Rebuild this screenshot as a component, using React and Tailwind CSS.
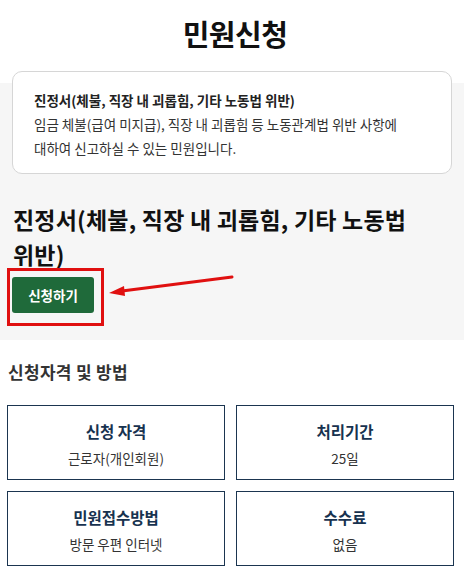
const INFO = [
  { title: "신청 자격", value: "근로자(개인회원)" },
  { title: "처리기간", value: "25일" },
  { title: "민원접수방법", value: "방문 우편 인터넷" },
  { title: "수수료", value: "없음" },
]

export default function App() {
  return (
    <div className="w-[464px] min-h-[587px] bg-white text-[#111] font-['Noto_Sans_CJK_KR','Noto_Sans',sans-serif]">
      {/* Page title */}
      <div className="h-[83px] pt-[13px] pl-[6px] text-center">
        <h1 className="text-[29px] leading-[40px] font-bold tracking-[-0.5px]">민원신청</h1>
      </div>

      {/* Summary + apply */}
      <section className="relative bg-[#f6f6f6] pb-[27px]">
        <div className="relative -top-[12px] mx-[12px] rounded-[10px] border border-[#d6d6d6] bg-white px-[21px] pt-[16px] pb-[13px] text-[13.5px] leading-[24px] text-[#333] break-keep">
          <p className="font-bold text-[#222]">진정서(체불, 직장 내 괴롭힘, 기타 노동법 위반)</p>
          <p>임금 체불(급여 미지급), 직장 내 괴롭힘 등 노동관계법 위반 사항에 대하여 신고하실 수 있는 민원입니다.</p>
        </div>

        <div className="px-[13px] pr-[30px]">
          <h2 className="mt-[16px] text-[23px] leading-[35px] font-bold tracking-[0.2px] text-[#111] break-keep">
            진정서(체불, 직장 내 괴롭힘, 기타 노동법 위반)
          </h2>
          <button className="mt-[5px] -ml-[1px] h-[36px] w-[82px] rounded-[3px] bg-[#1f6a3a] text-[13.5px] font-bold text-white">
            신청하기
          </button>
        </div>

        {/* Annotation */}
        <div className="absolute left-[7px] top-[185px] h-[58px] w-[97px] border-[3px] border-[#e01010]" />
        <svg className="absolute left-[104px] top-[188px]" width="134" height="26" viewBox="0 0 134 26">
          <line x1="128" y1="6" x2="18" y2="20" stroke="#e01010" strokeWidth="3" strokeLinecap="round" />
          <polygon points="5,22 20,15 21,25" fill="#e01010" />
        </svg>
      </section>

      {/* Details */}
      <section className="pl-[7px] pr-[10px] pt-[21px] pb-[21px]">
        <h3 className="pl-[1px] text-[17px] leading-[22px] font-bold tracking-[0.3px] text-[#333]">신청자격 및 방법</h3>
        <div className="mt-[22px] grid grid-cols-2 gap-[11px]">
          {INFO.map((item) => (
            <div
              key={item.title}
              className="flex h-[75px] flex-col items-center justify-center border border-[#1b3550] pt-[4px]"
            >
              <div className="text-[15.5px] leading-[20px] font-bold text-[#17324f]">{item.title}</div>
              <div className="mt-[7px] text-[13.5px] leading-[20px] text-[#333]">{item.value}</div>
            </div>
          ))}
        </div>
      </section>
    </div>
  )
}
